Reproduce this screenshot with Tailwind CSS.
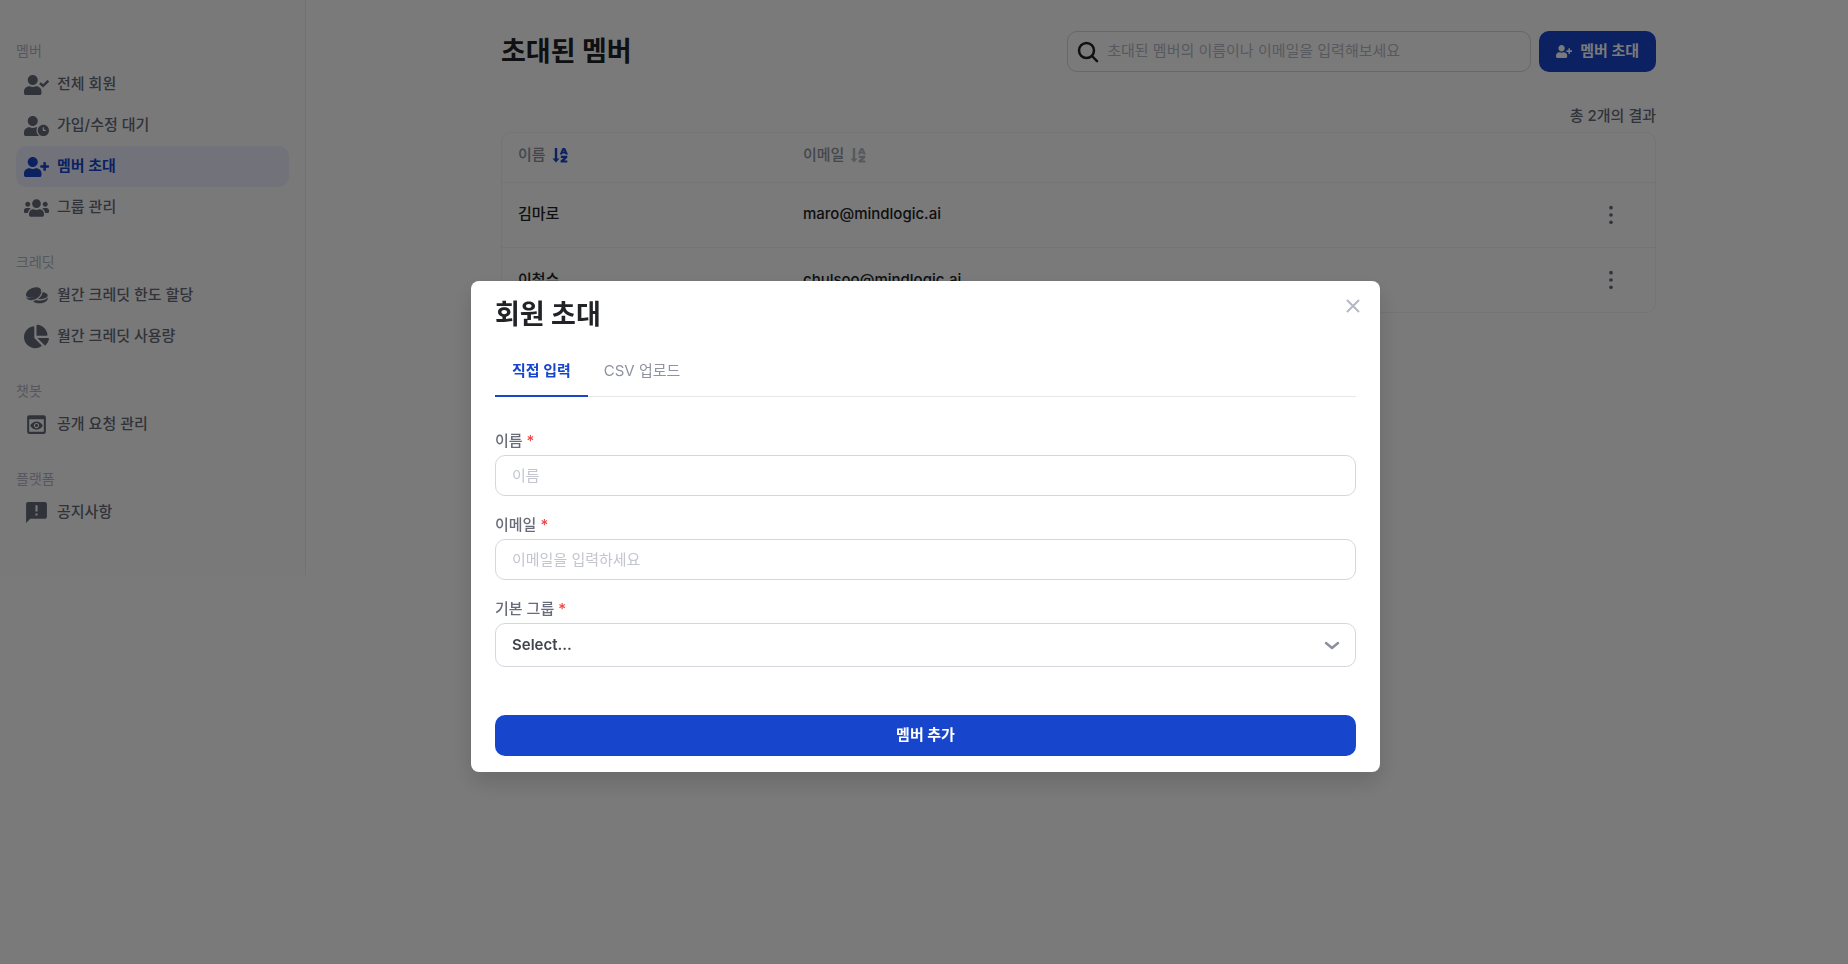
<!DOCTYPE html>
<html lang="ko">
<head>
    <meta charset="UTF-8">
    <meta name="viewport" content="width=device-width, initial-scale=1.0">
    <title>초대된 멤버</title>
    <script src="https://cdn.jsdelivr.net/npm/@tailwindcss/browser@4"></script>
</head>
<body class="min-h-screen bg-white font-['Inter','Noto_Sans_CJK_KR',sans-serif] text-[15px] text-[#212327]">

    <!-- Icons shared by several places -->
    <svg class="hidden" aria-hidden="true">
        <symbol id="icon-user-plus" viewBox="0 0 640 512"><path d="M624 208h-64v-64c0-8.8-7.2-16-16-16h-32c-8.8 0-16 7.2-16 16v64h-64c-8.8 0-16 7.2-16 16v32c0 8.8 7.2 16 16 16h64v64c0 8.8 7.2 16 16 16h32c8.8 0 16-7.2 16-16v-64h64c8.8 0 16-7.2 16-16v-32c0-8.8-7.2-16-16-16zm-400 48c70.7 0 128-57.3 128-128S294.7 0 224 0 96 57.3 96 128s57.3 128 128 128zm89.6 32h-16.7c-22.2 10.2-46.9 16-72.9 16s-50.6-5.8-72.9-16h-16.7C60.2 288 0 348.2 0 422.4V464c0 26.5 21.5 48 48 48h352c26.5 0 48-21.5 48-48v-41.6c0-74.2-60.2-134.4-134.4-134.4z"/></symbol>
        <symbol id="icon-sort" viewBox="0 0 16 16"><path d="M2.800 1h2.400v10.500h2.300L4 15.500.5 11.500h2.300zM10.500 1h2.600L16 7.400h-2.500l-.4-1h-2.600l-.4 1H7.700zM11.800 3.200l-.6 1.500h1.200zM8.800 8.800h6.500v2L12.200 13.400h3.100v2.100H8.600v-2L11.700 10.900H8.800z"/></symbol>
        <symbol id="icon-dots" viewBox="0 0 24 24"><circle cx="12" cy="4" r="2"/><circle cx="12" cy="12" r="2"/><circle cx="12" cy="20" r="2"/></symbol>
    </svg>

    <div class="flex items-start border-l border-white">
        <!-- Sidebar -->
        <aside class="w-[305px] shrink-0 border-r border-[#efeff2] bg-[#fdfdfe] pt-[38px] pr-4 pb-[42px] pl-[15px]">
            <nav class="flex flex-col gap-[21px] font-medium text-[#686c79]">
                <section>
                    <h2 class="h-[26px] text-sm leading-[26px] font-normal text-[#b4b7c1]">멤버</h2>
                    <a href="#" class="flex h-[41px] items-center gap-2 rounded-[10px] px-2">
                        <svg class="h-5 w-[25px] fill-current" viewBox="0 0 640 512"><path d="M224 256c70.7 0 128-57.3 128-128S294.7 0 224 0 96 57.3 96 128s57.3 128 128 128zm89.600 32h-16.7c-22.2 10.2-46.9 16-72.9 16s-50.6-5.8-72.9-16h-16.7C60.2 288 0 348.2 0 422.4V464c0 26.5 21.5 48 48 48h352c26.5 0 48-21.5 48-48v-41.6c0-74.2-60.2-134.4-134.4-134.4zm323-128.400l-27.800-28.100c-4.600-4.700-12.100-4.700-16.800-.1l-104.800 104-45.500-45.800c-4.600-4.700-12.100-4.700-16.800-.1l-28.100 27.900c-4.700 4.600-4.700 12.100-.1 16.800l81.700 82.300c4.600 4.700 12.100 4.700 16.800.1l141.300-140.200c4.600-4.700 4.700-12.200.1-16.800z"/></svg>
                        전체 회원
                    </a>
                    <a href="#" class="flex h-[41px] items-center gap-2 rounded-[10px] px-2">
                        <svg class="h-5 w-[25px] fill-current" viewBox="0 0 640 512"><path d="M496 224c-79.6 0-144 64.4-144 144s64.4 144 144 144 144-64.4 144-144-64.4-144-144-144zm64 150.3c0 5.3-4.4 9.7-9.7 9.7h-60.6c-5.3 0-9.7-4.4-9.7-9.7v-76.6c0-5.3 4.4-9.7 9.7-9.7h12.6c5.3 0 9.7 4.4 9.7 9.7V352h38.3c5.3 0 9.7 4.4 9.7 9.7v12.6zM320 368c0-27.8 6.7-54.1 18.2-77.5-8-1.5-16.2-2.5-24.6-2.5h-16.7c-22.2 10.2-46.9 16-72.9 16s-50.6-5.8-72.9-16h-16.7C60.2 288 0 348.2 0 422.4V464c0 26.5 21.5 48 48 48h347.1c-45.3-31.9-75.1-84.5-75.1-144zm-96-112c70.7 0 128-57.3 128-128S294.7 0 224 0 96 57.3 96 128s57.3 128 128 128z"/></svg>
                        가입/수정 대기
                    </a>
                    <a href="#" aria-current="page" class="flex h-[41px] items-center gap-2 rounded-[10px] bg-[#eef1ff] px-2 font-bold text-[#1746cc]">
                        <svg class="h-5 w-[25px] fill-current"><use href="#icon-user-plus"/></svg>
                        멤버 초대
                    </a>
                    <a href="#" class="flex h-[41px] items-center gap-2 rounded-[10px] px-2">
                        <svg class="h-5 w-[25px] fill-current" viewBox="0 0 640 512"><path d="M96 224c35.3 0 64-28.7 64-64s-28.7-64-64-64-64 28.7-64 64 28.7 64 64 64zm448 0c35.3 0 64-28.7 64-64s-28.7-64-64-64-64 28.7-64 64 28.7 64 64 64zm32 32h-64c-17.6 0-33.5 7.1-45.1 18.6 40.3 22.1 68.9 62 75.1 109.4h66c17.7 0 32-14.3 32-32v-32c0-35.3-28.7-64-64-64zm-256 0c61.9 0 112-50.1 112-112S381.9 32 320 32 208 82.1 208 144s50.1 112 112 112zm76.8 32h-8.3c-20.8 10-43.9 16-68.5 16s-47.6-6-68.5-16h-8.3C179.6 288 128 339.6 128 403.2V432c0 26.5 21.5 48 48 48h288c26.5 0 48-21.5 48-48v-28.8c0-63.6-51.6-115.2-115.2-115.2zm-223.7-13.4C161.5 263.1 145.6 256 128 256H64c-35.3 0-64 28.7-64 64v32c0 17.7 14.3 32 32 32h65.9c6.3-47.4 34.9-87.3 75.2-109.4z"/></svg>
                        그룹 관리
                    </a>
                </section>
                <section>
                    <h2 class="h-[26px] text-sm leading-[26px] font-normal text-[#b4b7c1]">크레딧</h2>
                    <a href="#" class="flex h-[41px] items-center gap-2 rounded-[10px] px-2">
                        <svg class="h-[25px] w-[25px] fill-current" viewBox="0 0 25 25"><ellipse cx="9.500" cy="9.500" rx="8" ry="4.600" transform="rotate(-24 9.500 9.500)"/><path d="M2.200 14.300C5 16.800 14 13.600 17.200 7.800c1 4.400-4.800 9.200-9.700 9.400-3 .1-5-1.200-5.300-2.900zM18.500 9.200c3 .2 5 1.400 5.200 3 .2 2.500-4.700 4.400-9.700 3.700 2.600-1.600 4.300-3.900 4.500-6.700zM12 17c4.500 1.300 9.800.3 11.900-2.500.3 3.700-4 5.800-8.400 5.800-3 0-5.500-.8-6.500-2.300 1 0 2-.4 3-1z"/></svg>
                        월간 크레딧 한도 할당
                    </a>
                    <a href="#" class="flex h-[41px] items-center gap-2 rounded-[10px] px-2">
                        <svg class="h-[25px] w-[25px] fill-current" viewBox="0 0 544 512"><path d="M527.79 288H290.5l158.03 158.03c6.04 6.04 15.98 6.53 22.19.68 38.7-36.46 65.32-85.61 73.13-140.86 1.34-9.46-6.51-17.85-16.06-17.85zm-15.83-64.8C503.72 103.74 408.26 8.28 288.8.04 279.68-.59 272 7.1 272 16.24V240h223.77c9.14 0 16.82-7.68 16.19-16.8zM224 288V50.71c0-9.55-8.39-17.4-17.84-16.06C86.99 51.49-4.1 155.6.14 280.37 4.5 408.51 114.83 513.59 243.03 511.98c50.4-.63 96.97-16.87 135.26-44.03 7.9-5.6 8.42-17.23 1.57-24.08L224 288z"/></svg>
                        월간 크레딧 사용량
                    </a>
                </section>
                <section>
                    <h2 class="h-[26px] text-sm leading-[26px] font-normal text-[#b4b7c1]">챗봇</h2>
                    <a href="#" class="flex h-[41px] items-center gap-2 rounded-[10px] px-2">
                        <svg class="h-[25px] w-[25px] fill-current" viewBox="0 0 24 24"><path d="M19 3H5c-1.11 0-2 .9-2 2v14c0 1.1.89 2 2 2h14c1.1 0 2-.9 2-2V5c0-1.1-.89-2-2-2zm0 16H5V7h14v12zm-5.5-6c0 .83-.67 1.5-1.5 1.5s-1.5-.67-1.5-1.5.67-1.5 1.5-1.5 1.5.67 1.5 1.5zM12 9c-2.73 0-5.06 1.66-6 4 .94 2.34 3.27 4 6 4s5.06-1.66 6-4c-.94-2.34-3.27-4-6-4zm0 6.5c-1.38 0-2.5-1.12-2.5-2.5s1.12-2.5 2.5-2.5 2.5 1.12 2.5 2.5-1.12 2.5-2.5 2.5z"/></svg>
                        공개 요청 관리
                    </a>
                </section>
                <section>
                    <h2 class="h-[26px] text-sm leading-[26px] font-normal text-[#b4b7c1]">플랫폼</h2>
                    <a href="#" class="flex h-[41px] items-center gap-2 rounded-[10px] px-2">
                        <svg class="h-[25px] w-[25px] fill-current" viewBox="0 0 24 24"><path d="M20 2H4c-1.1 0-1.99.9-1.99 2L2 22l4-4h14c1.1 0 2-.9 2-2V4c0-1.1-.9-2-2-2zm-7 9h-2V5h2v6zm0 4h-2v-2h2v2z"/></svg>
                        공지사항
                    </a>
                </section>
            </nav>
        </aside>

        <!-- Member list -->
        <main class="min-w-0 flex-1 pt-[31px] pr-[192px] pl-[195px]">
            <header class="flex items-center justify-between">
                <h1 class="text-[27px] leading-10 font-bold">초대된 멤버</h1>
                <div class="flex gap-2">
                    <label class="flex h-[41px] w-[464px] items-center gap-2 rounded-[10px] border border-[#d5d7de] px-[9px]">
                        <svg class="h-[22px] w-[22px] fill-none stroke-current stroke-[2.5]" viewBox="0 0 22 22"><circle cx="9.500" cy="9.500" r="7.500"/><path d="M15 15l5 5.200" stroke-linecap="round"/></svg>
                        <input type="search" aria-label="멤버 검색" placeholder="초대된 멤버의 이름이나 이메일을 입력해보세요" class="min-w-0 flex-1 outline-none placeholder:text-[#b8bbc4]">
                    </label>
                    <button type="button" class="flex h-[41px] items-center gap-2 rounded-[10px] bg-[#1746cc] px-[17px] font-bold text-white">
                        <svg class="h-[13px] w-4 fill-current"><use href="#icon-user-plus"/></svg>
                        멤버 초대
                    </button>
                </div>
            </header>
            <p class="mt-8 text-right leading-6 font-medium text-[#686c79]">총 2개의 결과</p>
            <div class="mt-1 rounded-[10px] border border-[#f2f2f4]">
                <table class="w-full table-fixed text-left">
                    <colgroup>
                        <col class="w-[285px]">
                        <col>
                        <col class="w-[87px]">
                    </colgroup>
                    <thead class="text-[#8f93a0]">
                        <tr class="h-[49px] border-b border-[#f2f2f4]">
                            <th class="px-4 pb-1 font-medium"><button type="button" class="flex items-center gap-[6px]">이름 <svg class="h-4 w-4 fill-[#1746cc]"><use href="#icon-sort"/></svg></button></th>
                            <th class="px-4 pb-1 font-medium"><button type="button" class="flex items-center gap-[6px]">이메일 <svg class="h-4 w-4 fill-[#b8bbc4]"><use href="#icon-sort"/></svg></button></th>
                            <th></th>
                        </tr>
                    </thead>
                    <tbody class="font-medium">
                        <tr class="h-[65px] border-b border-[#f2f2f4]">
                            <td class="px-4">김마로</td>
                            <td class="px-4">maro@mindlogic.ai</td>
                            <td><button type="button" aria-label="더보기" class="block px-8 text-[#686c79]"><svg class="h-[22px] w-[22px] fill-current"><use href="#icon-dots"/></svg></button></td>
                        </tr>
                        <tr class="h-[65px]">
                            <td class="px-4">이철수</td>
                            <td class="px-4">chulsoo@mindlogic.ai</td>
                            <td><button type="button" aria-label="더보기" class="block px-8 text-[#686c79]"><svg class="h-[22px] w-[22px] fill-current"><use href="#icon-dots"/></svg></button></td>
                        </tr>
                    </tbody>
                </table>
            </div>
        </main>
    </div>

    <!-- Invite modal -->
    <div class="fixed inset-0 flex items-start justify-center bg-black/52 pt-[281px] pl-[3px]">
        <div role="dialog" aria-labelledby="invite-title" class="w-full max-w-[909px] rounded-lg bg-white px-6 pt-[14px] pb-4 shadow-[0_10px_24px_rgba(0,0,0,0.15)]">
            <div class="flex items-start justify-between">
                <h2 id="invite-title" class="text-[27px] leading-10 font-bold">회원 초대</h2>
                <button type="button" aria-label="닫기" class="-mr-2 p-1 text-[#b4b7c4]">
                    <svg class="h-[14px] w-[14px] fill-none stroke-current stroke-2" viewBox="0 0 14 14"><path d="M1 1l12 12M13 1L1 13"/></svg>
                </button>
            </div>
            <div role="tablist" class="mt-[10px] flex border-b border-[#e8e8ea]">
                <button type="button" role="tab" aria-selected="true" class="-mb-px h-[52px] border-b-2 border-[#1746cc] px-[17px] pt-[2px] font-bold text-[#1746cc]">직접 입력</button>
                <button type="button" role="tab" class="h-[50px] px-4 pt-[2px] text-[#8f93a0]">CSV 업로드</button>
            </div>
            <form class="mt-8">
                <label for="name" class="block leading-6 font-medium text-[#686c79]">이름 <span class="text-[#ef4444]">*</span></label>
                <input id="name" type="text" placeholder="이름" class="mt-[2px] h-[41px] w-full rounded-[10px] border border-[#d5d7de] px-4 outline-none placeholder:text-[#c3c6ce]">
                <label for="email" class="mt-[17px] block leading-6 font-medium text-[#686c79]">이메일 <span class="text-[#ef4444]">*</span></label>
                <input id="email" type="email" placeholder="이메일을 입력하세요" class="mt-[2px] h-[41px] w-full rounded-[10px] border border-[#d5d7de] px-4 outline-none placeholder:text-[#c3c6ce]">
                <label for="group" class="mt-[17px] block leading-6 font-medium text-[#686c79]">기본 그룹 <span class="text-[#ef4444]">*</span></label>
                <div class="relative mt-[2px]">
                    <select id="group" class="h-11 w-full appearance-none rounded-[10px] border border-[#d5d7de] px-4 font-semibold text-[#41454f] outline-none">
                        <option>Select...</option>
                    </select>
                    <svg class="pointer-events-none absolute top-3 right-[14px] h-5 w-5 fill-none stroke-[#8b90a0] stroke-[2.5]" viewBox="0 0 20 20"><path d="M4 8l6 5 6-5" stroke-linecap="round" stroke-linejoin="round"/></svg>
                </div>
                <button type="submit" class="mt-12 h-[41px] w-full rounded-[10px] bg-[#1746cc] font-bold text-white">멤버 추가</button>
            </form>
        </div>
    </div>
</body>
</html>
